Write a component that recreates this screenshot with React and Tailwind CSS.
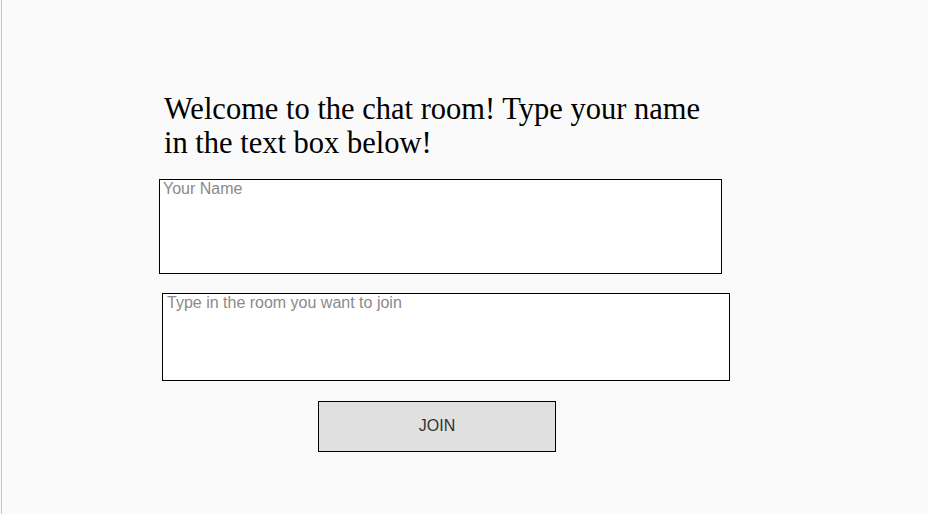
import React from 'react'

export default function App() {
  return (
    <div className="w-[928px] h-[514px] bg-[#fafafa] pl-px overflow-hidden">
      <div className="h-full border-l border-[#c6c6c6]">
        <div className="pt-[92px] pl-[157px] flex flex-col">
          <h1 className="ml-[5px] w-[560px] text-[30.5px] leading-[34px] text-black font-['Liberation_Serif',serif]">
            Welcome to the chat room! Type your name in the text box below!
          </h1>
          <textarea
            placeholder="Your Name"
            className="mt-[19px] w-[563px] h-[95px] bg-white border border-black px-[3px] py-0 resize-none outline-none text-[16px] leading-[18px] font-['Liberation_Sans',sans-serif] placeholder:text-[#8a8a8a]"
          />
          <textarea
            placeholder="Type in the room you want to join"
            className="mt-[19px] ml-[3px] w-[568px] h-[88px] bg-white border border-black px-[4px] py-0 resize-none outline-none text-[16px] leading-[18px] font-['Liberation_Sans',sans-serif] placeholder:text-[#8a8a8a]"
          />
          <button className="mt-[20px] ml-[159px] w-[238px] h-[51px] pb-px bg-[#e0e0e0] border border-black text-[16px] text-[#333] font-['Liberation_Sans',sans-serif]">
            JOIN
          </button>
        </div>
      </div>
    </div>
  )
}
